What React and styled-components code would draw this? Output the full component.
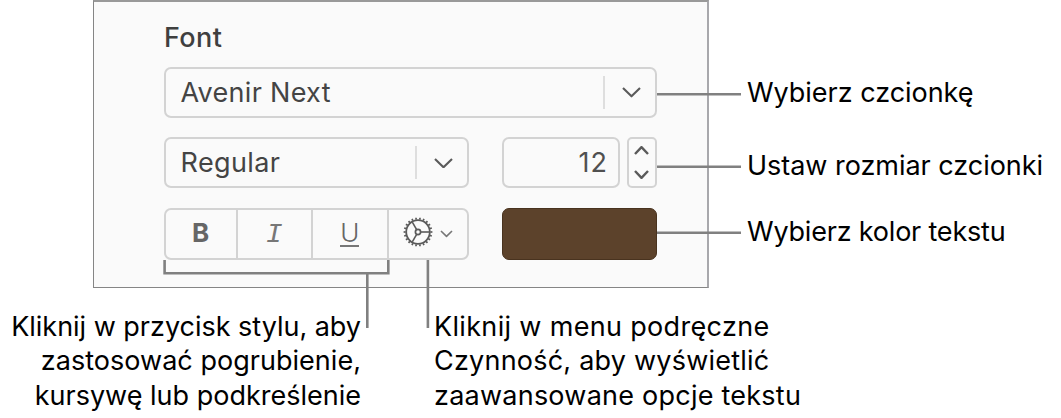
import React from 'react';
import styled, { createGlobalStyle } from 'styled-components';

const teeth = Array.from({ length: 22 }, (_, i) => (i * 360) / 22);

const Chevron = ({ w = 19, h = 10.5, stroke = 2.1, color = '#5a5a5a', up }) => (
  <svg width={w} height={h} viewBox={`0 0 ${w} ${h}`} fill="none" aria-hidden="true">
    <path
      d={up ? `M1 ${h - 1}L${w / 2} 1.2L${w - 1} ${h - 1}` : `M1 1L${w / 2} ${h - 1.2}L${w - 1} 1`}
      stroke={color}
      strokeWidth={stroke}
      strokeLinejoin="round"
    />
  </svg>
);

const Gear = () => (
  <svg width="30" height="30" viewBox="-15 -15 30 30" fill="none" stroke="#5a5a5a" aria-hidden="true">
    <circle r="11.8" strokeWidth="1.8" />
    <circle r="2.6" strokeWidth="1.7" />
    {[0, 120, 240].map((a) => (
      <path key={a} d="M3 0H11.4" strokeWidth="1.6" transform={`rotate(${a})`} />
    ))}
    {teeth.map((a) => (
      <path key={a} d="M12.4 0H14.4" strokeWidth="1.7" transform={`rotate(${a})`} />
    ))}
  </svg>
);

const Select = ({ value, width, spacing }) => (
  <Field $width={width}>
    <Value $spacing={spacing}>{value}</Value>
    <Separator />
    <Arrow>
      <Chevron />
    </Arrow>
  </Field>
);

const App = () => (
  <Figure lang="pl">
    <GlobalStyle />
    <Top>
      <Panel>
        <Title>Font</Title>
        <Row>
          <Select value="Avenir Next" width={493.5} spacing={0.3} />
        </Row>
        <Row>
          <Select value="Regular" width={305} spacing={0.4} />
          <SizeGroup>
            <SizeField>12</SizeField>
            <Stepper>
              <Chevron up w={15} h={9} stroke={2.4} />
              <Chevron w={15} h={9} stroke={2.4} />
            </Stepper>
          </SizeGroup>
        </Row>
        <Row>
          <Segments>
            <Segment $width={72}><Bold>B</Bold></Segment>
            <Segment $width={75.5}><Italic>I</Italic></Segment>
            <Segment $width={75.5}><Underline>U</Underline></Segment>
            <ActionMenu>
              <Gear />
              <Chevron w={13} h={7.5} stroke={1.6} color="#777" />
            </ActionMenu>
          </Segments>
          <Swatch />
        </Row>
      </Panel>
      <Labels>
        <Label $spacing={-0.03}>Wybierz czcionkę</Label>
        <Label $spacing={-0.03} $gap={39}>Ustaw rozmiar czcionki</Label>
        <Label $spacing={-0.2} $gap={32}>Wybierz kolor tekstu</Label>
      </Labels>
    </Top>
    <Bottom>
      <Caption $align="right" $width={361}>
        <Line $spacing={-0.02}>Kliknij w przycisk stylu, aby</Line>
        <Line $spacing={0.03}>zastosować pogrubienie,</Line>
        <Line $spacing={0}>kursywę lub podkreślenie</Line>
      </Caption>
      <Caption $align="left" $width={420}>
        <Line $spacing={0.33}>Kliknij w menu podręczne</Line>
        <Line $spacing={0.22}>Czynność, aby wyświetlić</Line>
        <Line $spacing={0.24}>zaawansowane opcje tekstu</Line>
      </Caption>
    </Bottom>
    <Leaders width="1061" height="418" fill="none" aria-hidden="true">
      <path d="M657 94.3H741M657 166.7H741M657 232.8H741" />
      <path d="M164.6 260V273.3H388.3V260M367.3 273V328M427.9 260V328" />
    </Leaders>
  </Figure>
);
export default App;

const GlobalStyle = createGlobalStyle`
  * {
    box-sizing: border-box;
  }

  body {
    margin: 0;
    background: #fff;
    font-family: Inter, 'Liberation Sans', sans-serif;
  }
`;

const Figure = styled.div`
  position: relative;
  width: 1061px;
  height: 418px;
  overflow: hidden;
  color: #000;
  font-size: 27px;
`;

const Top = styled.div`
  display: flex;
  height: 288px;
  padding-left: 93px;
`;

const Panel = styled.section`
  width: 616px;
  height: 288px;
  padding: 20px 0 0 69.5px;
  background: #fafafa;
  border: 1px solid #858585;
  border-top: 2px solid #999;
  border-right: 2px solid #a8a8ac;
`;

const Title = styled.h2`
  margin: 0 0 13px 0.5px;
  font-size: 27px;
  font-weight: 550;
  line-height: 32px;
  letter-spacing: 0.4px;
  color: #3f3f3f;
`;

const Row = styled.div`
  display: flex;
  justify-content: space-between;
  width: 493.5px;
  margin-bottom: 19.3px;
`;

const Field = styled.div`
  display: flex;
  align-items: center;
  width: ${(props) => props.$width}px;
  height: 51px;
  padding-left: 15px;
  border: 2px solid #d3d3d3;
  border-radius: 7px;
  color: #444;
`;

const Value = styled.span`
  flex: 1;
  line-height: 32px;
  letter-spacing: ${(props) => props.$spacing}px;
`;

const Separator = styled.span`
  width: 2px;
  height: 33px;
  background: #dedede;
`;

const Arrow = styled.span`
  display: flex;
  justify-content: center;
  width: 50px;
  padding-left: 3px;
`;

const SizeGroup = styled.div`
  display: flex;
  gap: 7px;
`;

const SizeField = styled.div`
  width: 117.5px;
  height: 51px;
  padding-right: 9.5px;
  border: 2px solid #d3d3d3;
  border-radius: 7px;
  line-height: 47px;
  letter-spacing: 1px;
  text-align: right;
  color: #505050;
`;

const Stepper = styled.div`
  display: flex;
  flex-direction: column;
  align-items: center;
  justify-content: space-between;
  width: 30.5px;
  height: 51px;
  padding: 7px 0;
  border: 2px solid #d3d3d3;
  border-radius: 5px;
`;

const Segments = styled.div`
  display: flex;
  width: 305px;
  height: 52px;
  border: 2px solid #d3d3d3;
  border-radius: 7px;
`;

const Segment = styled.div`
  display: flex;
  align-items: center;
  justify-content: center;
  width: ${(props) => props.$width}px;
  padding-bottom: 2px;
  border-right: 2px solid #d3d3d3;
  color: #666;
`;

const Bold = styled.b`
  font-size: 26px;
  font-weight: 700;
`;

const Italic = styled.i`
  padding-top: 4px;
  font-family: 'Liberation Mono', monospace;
  font-size: 28px;
  color: #777;
`;

const Underline = styled.span`
  height: 28px;
  font-size: 26px;
  font-weight: 300;
  line-height: 28px;
  border-bottom: 2px solid #777;
`;

const ActionMenu = styled.div`
  display: flex;
  flex: 1;
  align-items: center;
  padding: 0 0 3px 14px;
  gap: 7.5px;

  svg:last-child {
    margin-top: 4px;
  }
`;

const Swatch = styled.div`
  width: 155px;
  height: 52px;
  background: #5c422b;
  border: 1px solid #49331f;
  border-radius: 7px;
`;

const Labels = styled.div`
  padding: 76px 0 0 38px;
`;

const Label = styled.div`
  margin-top: ${(props) => props.$gap || 0}px;
  line-height: 34px;
  letter-spacing: ${(props) => props.$spacing}px;
  white-space: nowrap;
`;

const Bottom = styled.div`
  display: flex;
  gap: 73px;
  padding-top: 21.5px;
`;

const Caption = styled.div`
  width: ${(props) => props.$width}px;
  text-align: ${(props) => props.$align};
`;

const Line = styled.div`
  line-height: 34.5px;
  letter-spacing: ${(props) => props.$spacing}px;
  white-space: nowrap;
`;

const Leaders = styled.svg`
  position: absolute;
  top: 0;
  left: 0;
  stroke: #808080;
  stroke-width: 2.6;
`;
